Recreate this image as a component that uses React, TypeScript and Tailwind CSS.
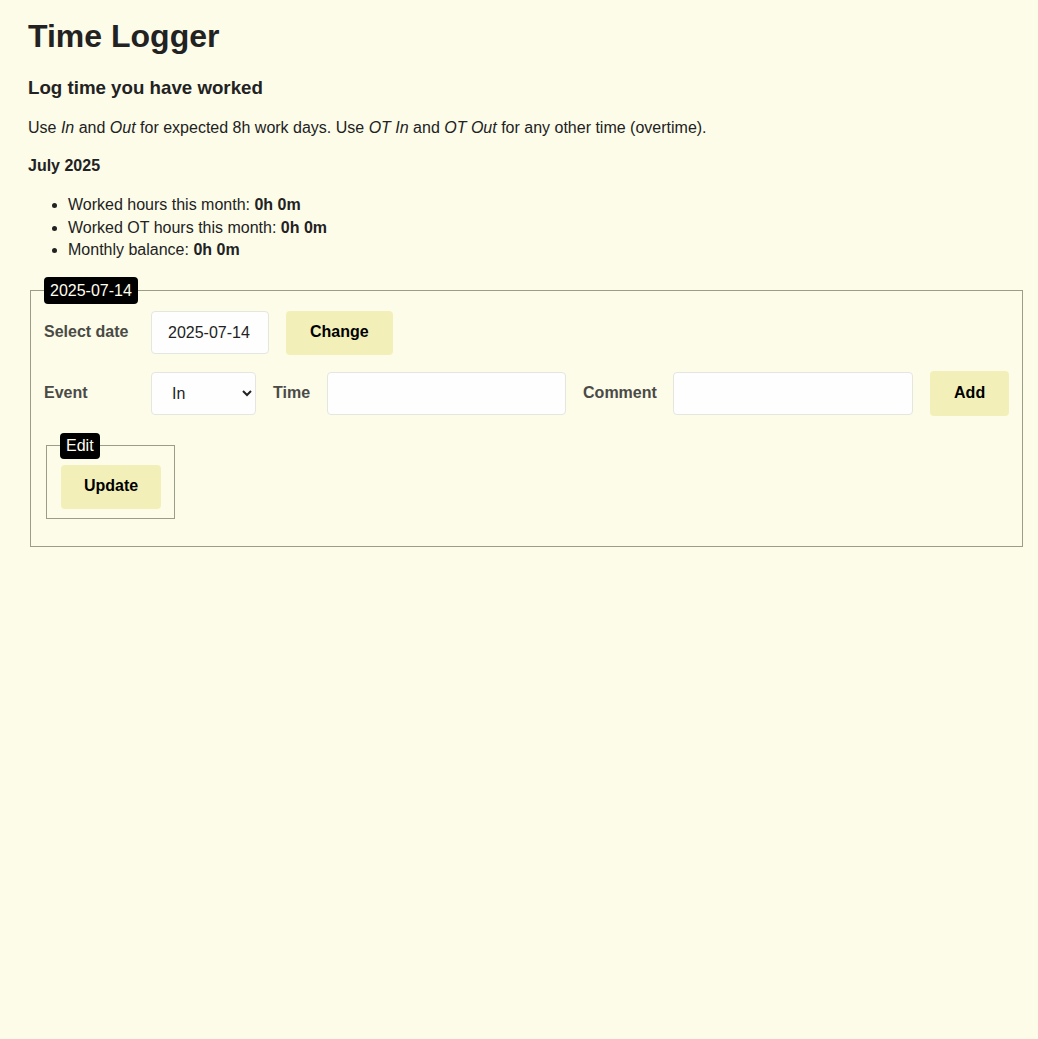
export default function App() {
  return (
    <div className="min-h-screen bg-[#fcfce9] px-[28px] pt-[17px] text-[16px] leading-[1.4] text-[#222] font-['Liberation_Sans',Arial,sans-serif]">
      <h1 className="text-[32px] font-bold leading-[38px]">Time Logger</h1>
      <h2 className="mt-5 text-[18.72px] font-bold leading-[26px]">Log time you have worked</h2>
      <p className="mt-4 leading-[22px]">
        Use <em>In</em> and <em>Out</em> for expected 8h work days. Use <em>OT In</em> and <em>OT Out</em> for any
        other time (overtime).
      </p>
      <p className="mt-[16px] font-bold leading-[22px]">July 2025</p>
      <ul className="mt-[17px] list-disc pl-10 leading-[22.5px]">
        <li>
          Worked hours this month: <b>0h 0m</b>
        </li>
        <li>
          Worked OT hours this month: <b>0h 0m</b>
        </li>
        <li>
          Monthly balance: <b>0h 0m</b>
        </li>
      </ul>

      <fieldset className="mx-[2px] mt-[15px] w-[992px] border border-[#9c9c88] px-[13px] pt-[7px] pb-[27px]">
        <legend className="rounded-[4px] bg-black px-[6px] leading-[27px] text-[#fffff0]">2025-07-14</legend>

        <div className="flex items-center gap-[17px]">
          <label className="w-[90px] font-bold text-[#4a4a46]">Select date</label>
          <input
            defaultValue="2025-07-14"
            className="h-[43px] w-[118px] rounded-[4px] border border-[#e6e6e0] bg-[#fefefe] px-4 outline-none"
          />
          <button className="h-[44px] rounded-[4px] bg-[#f2f0b8] px-[24px] font-bold text-black">Change</button>
        </div>

        <div className="mt-[16px] flex items-center gap-[17px]">
          <label className="w-[90px] font-bold text-[#4a4a46]">Event</label>
          <select className="h-[43px] w-[105px] rounded-[4px] border border-[#e6e6e0] bg-[#fefefe] px-4 outline-none">
            <option>In</option>
            <option>Out</option>
            <option>OT In</option>
            <option>OT Out</option>
          </select>
          <label className="font-bold text-[#4a4a46]">Time</label>
          <input className="h-[43px] w-[239px] rounded-[4px] border border-[#e6e6e0] bg-[#fefefe] px-4 outline-none" />
          <label className="w-[73px] font-bold text-[#4a4a46]">Comment</label>
          <input className="h-[43px] w-[240px] rounded-[4px] border border-[#e6e6e0] bg-[#fefefe] px-4 outline-none" />
          <button className="h-[45px] rounded-[4px] bg-[#f2f0b8] px-[24px] font-bold text-black">Add</button>
        </div>

        <fieldset className="mx-[2px] mt-[17px] inline-block border border-[#9c9c88] px-[13px] pt-[6px] pb-[9px]">
          <legend className="rounded-[4px] bg-black px-[6px] leading-[26px] text-[#fffff0]">Edit</legend>
          <button className="ml-[1px] h-[44px] rounded-[4px] bg-[#f2f0b8] px-[23px] font-bold text-black">
            Update
          </button>
        </fieldset>
      </fieldset>
    </div>
  )
}
